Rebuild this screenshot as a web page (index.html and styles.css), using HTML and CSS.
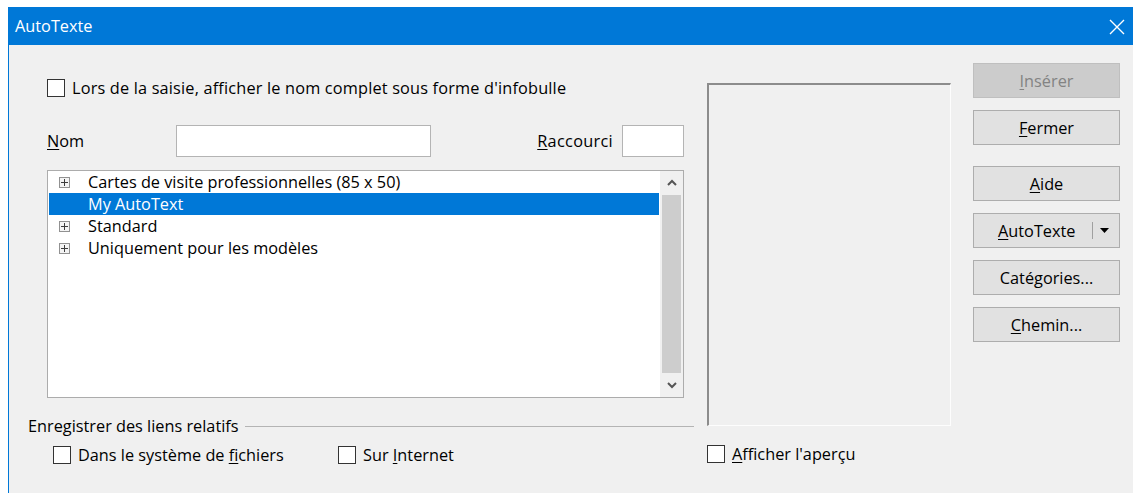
FILE: index.html
```html
<!DOCTYPE html>
<html lang="fr">
<head>
<meta charset="utf-8">
<title>AutoTexte</title>
<link rel="stylesheet" href="styles.css">
</head>
<body>
<div class="window">
  <div class="titlebar">
    <span class="title">AutoTexte</span>
    <svg class="close" width="16" height="16" viewBox="0 0 16 16"><path d="M1 1L15 15M15 1L1 15" stroke="#fff" stroke-width="1.4" fill="none"/></svg>
  </div>
  <div class="content">
    <div class="main">
      <div class="inner">
        <label class="check top-check"><span class="box"></span><span class="wide">Lors de la saisie, afficher le nom complet sous forme d'infobulle</span></label>
        <div class="name-row">
          <span class="name-label"><u>N</u>om</span>
          <span class="field name-field"></span>
          <span class="spacer"></span>
          <span class="short-label"><u>R</u>accourci</span>
          <span class="field short-field"></span>
        </div>
        <div class="list">
          <div class="rows">
            <div class="row"><span class="plus"></span><span>Cartes de visite professionnelles (85 x 50)</span></div>
            <div class="row selected"><span class="noplus"></span><span>My AutoText</span></div>
            <div class="row"><span class="plus"></span><span>Standard</span></div>
            <div class="row"><span class="plus"></span><span>Uniquement pour les modèles</span></div>
          </div>
          <div class="scrollbar">
            <svg class="arrow" width="10" height="7" viewBox="0 0 10 7"><path d="M1 6L5 2L9 6" stroke="#555" stroke-width="2" fill="none"/></svg>
            <div class="thumb"></div>
            <svg class="arrow" width="10" height="7" viewBox="0 0 10 7"><path d="M1 1L5 5L9 1" stroke="#555" stroke-width="2" fill="none"/></svg>
          </div>
        </div>
      </div>
      <div class="group-head">
        <span>Enregistrer des liens relatifs</span>
        <span class="rule"></span>
      </div>
      <div class="group-checks">
        <label class="check fs-check"><span class="box"></span><span>Dans le système de <u>f</u>ichiers</span></label>
        <label class="check"><span class="box"></span><span>Sur <u>I</u>nternet</span></label>
      </div>
    </div>
    <div class="preview-col">
      <div class="preview"></div>
      <label class="check"><span class="box"></span><span><u>A</u>fficher l'aperçu</span></label>
    </div>
    <div class="buttons">
      <div class="btn disabled"><span><u>I</u>nsérer</span></div>
      <div class="btn"><span><u>F</u>ermer</span></div>
      <div class="btn help"><span><u>A</u>ide</span></div>
      <div class="btn split"><span class="split-label"><u>A</u>utoTexte</span><span class="sep"></span><svg width="9" height="5" viewBox="0 0 9 5"><path d="M0 0H9L4.5 5Z" fill="#000"/></svg></div>
      <div class="btn"><span>Caté<u>g</u>ories...</span></div>
      <div class="btn"><span><u>C</u>hemin...</span></div>
    </div>
  </div>
</div>
</body>
</html>
```
FILE: styles.css
```css
html, body {
  margin: 0;
  padding: 0;
  background: #ffffff;
}

body {
  font-family: "Open Sans", "Noto Sans", sans-serif;
  font-size: 16.3px;
  color: #000;
}

u {
  text-decoration: underline;
  text-underline-offset: 2px;
}

.window {
  margin: 7px 0 0 8px;
  border-left: 1px solid #0078d7;
  height: 486px;
  display: flex;
  flex-direction: column;
}

.titlebar {
  height: 38px;
  background: #0078d7;
  display: flex;
  align-items: center;
  justify-content: space-between;
  padding: 0 8px 0 6px;
  flex: none;
}

.title {
  color: #fff;
}

.close {
  margin-top: 1px;
}

.content {
  flex: 1;
  background: #f0f0f0;
  display: flex;
  padding-left: 19px;
}

/* left part: option, name fields, category tree, link group */
.main {
  width: 666px;
  display: flex;
  flex-direction: column;
}

.inner {
  margin-left: 19px;
  width: 637px;
  display: flex;
  flex-direction: column;
}

.check {
  display: flex;
  align-items: center;
  height: 20px;
  white-space: nowrap;
}

.wide {
  letter-spacing: 0.18px;
}

.box {
  width: 16px;
  height: 16px;
  border: 1px solid #333;
  background: #fff;
  margin-right: 7px;
  flex: none;
}

.top-check {
  margin-top: 33px;
}

.name-row {
  margin-top: 27px;
  display: flex;
  align-items: center;
  height: 32px;
}

.name-label {
  width: 129px;
}

.field {
  height: 30px;
  background: #fff;
  border: 1px solid #b4b4b4;
  display: block;
}

.name-field {
  width: 253px;
}

.spacer {
  flex: 1;
}

.short-label {
  margin-right: 9px;
  letter-spacing: 0.3px;
}

.short-field {
  width: 60px;
}

.list {
  margin-top: 13px;
  height: 226px;
  border: 1px solid #acacac;
  background: #fff;
  display: flex;
}

.rows {
  flex: 1;
  padding: 0 1px;
}

.row {
  height: 22px;
  display: flex;
  align-items: center;
}

.row.selected {
  background: #0078d7;
  color: #fff;
}

.noplus {
  width: 11px;
  height: 11px;
  margin: 0 18px 0 10px;
  flex: none;
}

.plus {
  flex: none;
  border: 1px solid #919191;
  background: linear-gradient(#3c3c3c, #3c3c3c) center / 7px 1px no-repeat,
              linear-gradient(#3c3c3c, #3c3c3c) center / 1px 7px no-repeat,
              #f4f4f4;
  width: 9px;
  height: 9px;
  margin: 0 18px 0 10px;
}

.scrollbar {
  width: 23px;
  background: #f0f0f0;
  display: flex;
  flex-direction: column;
  align-items: center;
}

.arrow {
  margin: 8px 0;
  flex: none;
}

.thumb {
  width: 19px;
  flex: 1;
  background: #cdcdcd;
  margin: 1px 0;
}

.group-head {
  margin-top: 18px;
  display: flex;
  align-items: center;
  height: 20px;
}

.rule {
  flex: 1;
  height: 1px;
  background: #b4b4b4;
  margin-left: 6px;
}

.group-checks {
  margin-top: 9px;
  margin-left: 25px;
  display: flex;
}

.fs-check {
  width: 285px;
}

/* preview column */
.preview-col {
  margin-left: 13px;
  width: 244px;
  display: flex;
  flex-direction: column;
}

.preview {
  margin-top: 38px;
  height: 340px;
  border-top: 2px solid #8c8c8c;
  border-left: 2px solid #8c8c8c;
  border-right: 1px solid #fdfdfd;
  border-bottom: 1px solid #fdfdfd;
  background: #f0f0f0;
  margin-bottom: 18px;
}

/* button column */
.buttons {
  margin-left: 22px;
  width: 147px;
  display: flex;
  flex-direction: column;
  padding-top: 18px;
  gap: 12px;
}

.btn {
  height: 33px;
  border: 1px solid #adadad;
  background: #e1e1e1;
  display: flex;
  align-items: center;
  justify-content: center;
  white-space: nowrap;
}

.btn.disabled {
  background: #cccccc;
  border-color: #bfbfbf;
  color: #838383;
}

.btn.help {
  margin-top: 9px;
}

.btn.split {
  justify-content: flex-start;
  padding-left: 24px;
}

.split-label {
  width: 94px;
}

.sep {
  width: 1px;
  height: 17px;
  background: #a0a0a0;
  margin-right: 7px;
}
```
